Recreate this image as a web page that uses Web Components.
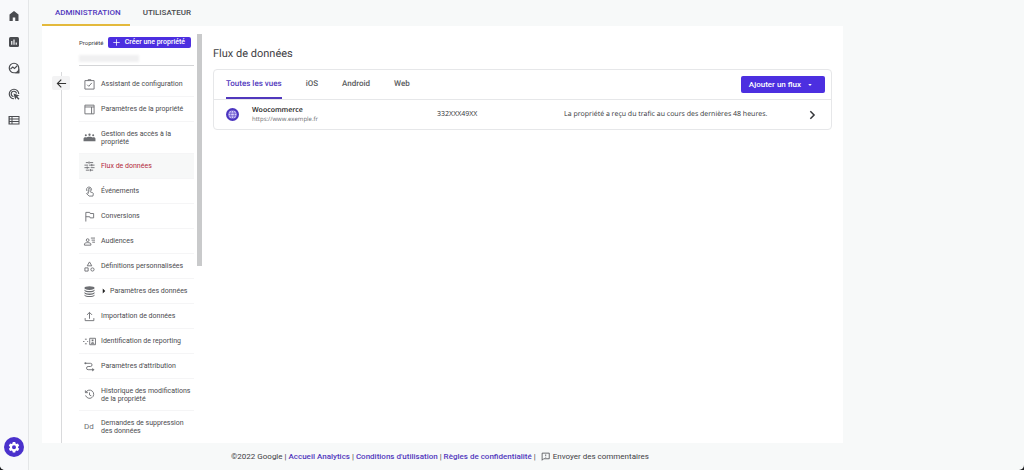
<!DOCTYPE html>
<html lang="fr">
<head>
<meta charset="utf-8">
<title>Administration - Flux de données</title>
<style>
  html { background: #1d1d20; }
  body {
    margin: 0;
    font-family: Roboto, "Liberation Sans", sans-serif;
    color: #3f4145;
    --accent: #4c2fe0;
    --link: #5138bd;
    --line: #e6e7e9;
  }
</style>
</head>
<body>
<admin-app></admin-app>

<script>
const ICONS = {
  home: `<path fill="currentColor" d="M12 2 3 9v13h6.500v-7h5v7H21V9z"/>`,
  chart: `<rect x="2" y="2" width="20" height="20" rx="3" fill="currentColor"/><path stroke="#f8f9fb" stroke-width="2.4" d="M7.500 10v7.500M12 7v10.500M16.500 13v4.500"/>`,
  explore: `<path fill="none" stroke="currentColor" stroke-width="2.400" d="M21.500 21.500H12A9.500 9.500 0 1 1 21.500 12z"/><path fill="none" stroke="currentColor" stroke-width="2.200" d="m5 14 4.500-4 3.500 3 5.500-5.500"/><path fill="currentColor" d="M22.500 14v8.500H14z"/>`,
  ads: `<path fill="none" stroke="currentColor" stroke-width="2.300" d="M21.500 12A9.500 9.500 0 1 0 12 21.500M17 11a5.300 5.300 0 1 0-6 6"/><path fill="currentColor" d="m11 11 12 4-4.500 2 4.500 4.500-2 2-4.500-4.500-2 4.500z"/>`,
  list: `<path fill="currentColor" fill-rule="evenodd" d="M1 4h22v17H1zM3.500 6v3h3.500V6zm5.500 0v3h12V6zM3.500 11v3h3.500v-3zm5.500 0v3h12v-3zM3.500 16v3h3.500v-3zm5.500 0v3h12v-3z"/>`,
  gear: `<path fill="currentColor" fill-rule="evenodd" d="M9.500 2h5l.6 3 1.900 1.100 2.900-1 2.500 4.300-2.300 2v2.200l2.300 2-2.500 4.300-2.900-1-1.900 1.100-.6 3h-5l-.6-3L7 18.900l-2.900 1-2.500-4.300 2.300-2v-2.200l-2.300-2 2.500-4.300 2.900 1L8.900 5zM12 8.500a4 4 0 1 0 0 8 4 4 0 0 0 0-8z"/>`,
  back: `<path fill="none" stroke="currentColor" stroke-width="2.400" d="M22 12H3m8.500-8.500L3 12l8.500 8.500"/>`,
  plus: `<path fill="none" stroke="currentColor" stroke-width="2.600" d="M12 1v22M1 12h22"/>`,
  check: `<path fill="none" stroke="currentColor" stroke-width="2" d="M2 3.500h20V22H2zM9 4V1.500h6V4M7 12.500l3.500 3.500 6.500-7.500"/>`,
  layout: `<path fill="none" stroke="currentColor" stroke-width="2" d="M2 2.500h20v19H2zM2 6.500h20M16.500 6.500v15"/>`,
  people: `<g fill="currentColor"><circle cx="4" cy="7" r="2.200"/><circle cx="12" cy="6" r="2.500"/><circle cx="20" cy="7" r="2.200"/><path d="M-1 20v-5c0-3 3-4 6-3 2-2 12-2 14 0 3-1 6 0 6 3v5z"/></g>`,
  streams: `<path fill="none" stroke="currentColor" stroke-width="2" d="M4 3.500h6M12 3.500h8M1 9h8M11 9h12M1 14.500h11M14.500 14.500H23M4 20h8M14 20h6M11 1v5M17 6.500v5M7 12v5M14 17.500v5"/>`,
  touch: `<path fill="none" stroke="currentColor" stroke-width="1.900" d="M6.500 11A5.500 5.500 0 1 1 16 10M9.500 16V7a1.900 1.900 0 0 1 3.800 0v5.500l6 2.500c1 .5 1.200 1.200 1 2.200L19.500 22H11l-5.500-5.500 1.500-1.300z"/>`,
  flag: `<path fill="none" stroke="currentColor" stroke-width="2" d="M4 23V3h8.500l1 2.500H21V15h-7.500l-1-2.500H4"/>`,
  audience: `<path fill="none" stroke="currentColor" stroke-width="2" d="M15 4.500h9M16.500 9H24M18 13.500h6M1 20v-2.500c0-4 14-4 14 0V20z"/><circle cx="8" cy="9" r="3" fill="none" stroke="currentColor" stroke-width="2"/>`,
  shapes: `<path fill="none" stroke="currentColor" stroke-width="2" d="m12 2 5 8.500H7zM2 15h7v7H2z"/><circle cx="18.500" cy="18.500" r="3.500" fill="none" stroke="currentColor" stroke-width="2"/>`,
  database: `<g fill="currentColor"><ellipse cx="12" cy="4.500" rx="11" ry="4"/><path d="M1 7.500c3 4.500 19 4.500 22 0v3c-3 4.500-19 4.500-22 0zM1 13c3 4.500 19 4.500 22 0v3c-3 4.500-19 4.500-22 0zM1 18.500c3 4.500 19 4.500 22 0v2c-3 4.500-19 4.500-22 0z"/></g>`,
  upload: `<path fill="none" stroke="currentColor" stroke-width="2" d="M12 17V3M6.500 8.500 12 3l5.500 5.500M2.500 15.500V21h19v-5.500"/>`,
  identity: `<path fill="none" stroke="currentColor" stroke-width="2" d="M-2 12h3M2 7h4M2 17h4M7 12h2M12.500 5H25v14H12.500z"/><path fill="currentColor" d="M15 17c0-4.500 7.500-4.500 7.500 0zM16.700 7.500h4v4h-4z"/>`,
  path: `<path fill="none" stroke="currentColor" stroke-width="2" d="M4 5h10a3.500 3.500 0 0 1 0 7H9a3.500 3.500 0 0 0 0 7h11"/><circle cx="3" cy="5" r="2.200" fill="currentColor"/><path fill="currentColor" d="m18 15 5 4-5 4z"/>`,
  history: `<path fill="none" stroke="currentColor" stroke-width="2" d="M4 7.500A9 9 0 1 1 3.500 14M3 3v5h5.500M12 7.500V13l4 2"/>`,
  globe: `<circle cx="12" cy="12" r="12" fill="#4c36c0"/><circle cx="12" cy="12" r="7.500" fill="#d6cffa"/><g fill="none" stroke="#5a45c8" stroke-width="1.300"><ellipse cx="12" cy="12" rx="3.300" ry="7.500"/><path d="M5 9.500h14M5 14.500h14"/></g>`,
  chevron: `<path fill="none" stroke="currentColor" stroke-width="3.600" d="m8 3 9 9-9 9"/>`,
  caret: `<path fill="currentColor" d="m5 8 7 8 7-8z"/>`,
  expand: `<path fill="currentColor" d="m7 2 10 10L7 22z"/>`,
  feedback: `<path fill="none" stroke="currentColor" stroke-width="2" d="M3 22V3h19v15H7zM12.500 6.500V11M12.500 13v2"/>`
};

class AdminIcon extends HTMLElement {
  constructor() {
    super();
    this.attachShadow({ mode: "open" });
  }

  connectedCallback() {
    this.shadowRoot.innerHTML = /* html */`
    <style>
      :host { display: block; flex: none; width: var(--icon-size, 12px); height: var(--icon-size, 12px); }
      svg { display: block; width: 100%; height: 100%; overflow: visible; }
    </style>
    <svg viewBox="0 0 24 24" aria-hidden="true">${ICONS[this.getAttribute("name")] ?? ""}</svg>`;
  }
}

class NavRail extends HTMLElement {
  constructor() {
    super();
    this.attachShadow({ mode: "open" });
    const items = [
      ["home", "Accueil"],
      ["chart", "Rapports"],
      ["explore", "Explorer"],
      ["ads", "Publicité"],
      ["list", "Configurer"]
    ];
    this.shadowRoot.innerHTML = /* html */`
    <style>
      :host {
        display: flex;
        flex-direction: column;
        justify-content: space-between;
        box-sizing: border-box;
        padding: 10px 0 13px;
        background: #f8f9fb;
        border-right: 1px solid #e4e6e8;
      }
      nav { display: grid; gap: 14px; justify-items: center; }
      a { color: #4a4c50; }
      button {
        display: grid;
        place-items: center;
        align-self: center;
        width: 20px;
        height: 20px;
        padding: 0;
        border: 0;
        border-radius: 50%;
        background: #4a31cc;
        color: #fff;
      }
    </style>
    <nav aria-label="Navigation principale">
      ${items.map(([icon, label]) => `<a href="#" aria-label="${label}"><admin-icon name="${icon}"></admin-icon></a>`).join("")}
    </nav>
    <button aria-label="Administration"><admin-icon name="gear"></admin-icon></button>`;
  }
}

class AdminTabs extends HTMLElement {
  constructor() {
    super();
    this.attachShadow({ mode: "open" });
    this.shadowRoot.innerHTML = /* html */`
    <style>
      :host { display: flex; height: 26px; }
      button {
        padding: 2px 9px 0 13px;
        border: 0;
        border-bottom: 2px solid transparent;
        background: none;
        font: 500 8px/20px Roboto, sans-serif;
        color: #4a4c50;
      }
      [aria-selected="true"] { color: var(--link); border-color: #e3b93c; }
    </style>
    <button role="tab" aria-selected="true">ADMINISTRATION</button>
    <button role="tab" aria-selected="false">UTILISATEUR</button>`;
  }
}

class MenuItem extends HTMLElement {
  constructor() {
    super();
    this.attachShadow({ mode: "open" });
  }

  connectedCallback() {
    const icon = this.getAttribute("icon");
    this.shadowRoot.innerHTML = /* html */`
    <style>
      :host { display: block; border-bottom: 1px solid #f5f5f6; }
      :host([active]) { background: #f7f8f8; }
      :host(:last-child) { border-color: transparent; }
      a {
        display: flex;
        align-items: center;
        gap: 6px;
        min-height: 24px;
        padding: 0 0 0 4px;
        font-size: 7px;
        line-height: 8px;
        color: #4a4b4e;
        text-decoration: none;
      }
      :host([tall]) a { min-height: 31px; }
      :host([active]) a { color: #b3283a; }
      .icon { display: grid; place-items: center; width: 12px; color: #6d6f73; font-size: 8px; --icon-size: 11px; }
      .expand { --icon-size: 6px; color: #222; margin-right: -3px; }
    </style>
    <a href="#">
      <span class="icon">${icon ? `<admin-icon name="${icon}"></admin-icon>` : "Dd"}</span>
      ${this.hasAttribute("expandable") ? `<admin-icon class="expand" name="expand"></admin-icon>` : ""}
      <span><slot></slot></span>
    </a>`;
  }
}

class PropertyMenu extends HTMLElement {
  constructor() {
    super();
    this.attachShadow({ mode: "open" });
    this.shadowRoot.innerHTML = /* html */`
    <style>
      :host { display: grid; grid-template-columns: 18px 127px 5px; padding-left: 10px; }
      .rail { display: flex; flex-direction: column; align-items: center; padding-top: 46px; }
      .rail i { width: 1px; height: 4px; background: #d9dadc; }
      .rail i:last-child { flex: 1; }
      .rail button {
        display: grid;
        place-items: center;
        width: 18px;
        height: 14px;
        padding: 0;
        border: 0;
        border-radius: 2px;
        background: #f3f3f4;
        color: #333;
        --icon-size: 11px;
      }
      .column { padding: 0 3px 0 9px; }
      .head { display: flex; align-items: center; justify-content: space-between; padding: 11px 3px 0 0; font-size: 6px; line-height: 11px; }
      .head button {
        display: flex;
        align-items: center;
        gap: 5px;
        height: 11px;
        padding: 0 6px 0 5px;
        border: 0;
        border-radius: 2px;
        background: var(--accent);
        color: #fff;
        font: 500 7px/11px Roboto, sans-serif;
        --icon-size: 7px;
      }
      .property { display: block; width: 100%; padding: 7px 0 3px; border: 0; border-bottom: 1px solid #d4d5d7; background: none; }
      .property span { display: block; width: 60px; height: 7px; background: #f0f0f1; filter: blur(1px); }
      nav { padding-top: 6px; }
      .scroll { margin-top: 8px; height: 232px; background: #c9cacb; }
    </style>
    <div class="rail"><i></i><button aria-label="Retour"><admin-icon name="back"></admin-icon></button><i></i></div>
    <div class="column">
      <div class="head"><span>Propriété</span><button><admin-icon name="plus"></admin-icon>Créer une propriété</button></div>
      <button class="property" aria-label="Choisir une propriété"><span></span></button>
      <nav aria-label="Propriété">
        <menu-item icon="check">Assistant de configuration</menu-item>
        <menu-item icon="layout">Paramètres de la propriété</menu-item>
        <menu-item icon="people" tall>Gestion des accès à la<br>propriété</menu-item>
        <menu-item icon="streams" active>Flux de données</menu-item>
        <menu-item icon="touch">Événements</menu-item>
        <menu-item icon="flag">Conversions</menu-item>
        <menu-item icon="audience">Audiences</menu-item>
        <menu-item icon="shapes">Définitions personnalisées</menu-item>
        <menu-item icon="database" expandable>Paramètres des données</menu-item>
        <menu-item icon="upload">Importation de données</menu-item>
        <menu-item icon="identity">Identification de reporting</menu-item>
        <menu-item icon="path">Paramètres d'attribution</menu-item>
        <menu-item icon="history" tall>Historique des modifications<br>de la propriété</menu-item>
        <menu-item tall>Demandes de suppression<br>des données</menu-item>
      </nav>
    </div>
    <div class="scroll"></div>`;
  }
}

class StreamCard extends HTMLElement {
  constructor() {
    super();
    this.attachShadow({ mode: "open" });
    this.shadowRoot.innerHTML = /* html */`
    <style>
      :host { display: block; border: 1px solid var(--line); border-radius: 4px; text-rendering: geometricPrecision; }
      .bar { display: flex; align-items: center; justify-content: space-between; padding: 0 6px 0 12px; border-bottom: 1px solid var(--line); }
      .tabs { display: flex; gap: 24px; }
      .tabs button {
        padding: 0;
        border: 0;
        border-bottom: 2px solid transparent;
        background: none;
        font: 500 8px/27px Roboto, sans-serif;
        text-rendering: inherit;
        color: #5a5c60;
      }
      .tabs [aria-selected="true"] { color: var(--link); border-color: var(--link); }
      .add {
        display: flex;
        align-items: center;
        gap: 6px;
        height: 17px;
        padding: 0 12px 0 8px;
        border: 0;
        border-radius: 2px;
        background: var(--accent);
        color: #fff;
        font: 500 8px/17px Roboto, sans-serif;
        --icon-size: 6px;
      }
      table { width: 100%; border-collapse: collapse; table-layout: fixed; font-family: "Open Sans", Roboto, sans-serif; font-size: 7px; line-height: 9px; color: #333539; }
      td { height: 29px; padding: 0; }
      .globe { width: 38px; padding-left: 12px; box-sizing: border-box; --icon-size: 13px; }
      .name { width: 30%; }
      .id { width: 127px; }
      .go { width: 24px; --icon-size: 10px; }
      strong { display: block; font-weight: 600; color: #222; }
      small { display: block; font-size: 6px; line-height: 8px; color: #6a6c70; }
    </style>
    <div class="bar">
      <div class="tabs" role="tablist">
        <button role="tab" aria-selected="true">Toutes les vues</button>
        <button role="tab">iOS</button>
        <button role="tab">Android</button>
        <button role="tab">Web</button>
      </div>
      <button class="add">Ajouter un flux<admin-icon name="caret"></admin-icon></button>
    </div>
    <table aria-label="Flux de données">
      <tr>
        <td class="globe"><admin-icon name="globe"></admin-icon></td>
        <td class="name"><strong>Woocommerce</strong><small>https://www.exemple.fr</small></td>
        <td class="id">332XXX49XX</td>
        <td>La propriété a reçu du trafic au cours des dernières 48 heures.</td>
        <td class="go"><admin-icon name="chevron"></admin-icon></td>
      </tr>
    </table>`;
  }
}

class AdminFooter extends HTMLElement {
  constructor() {
    super();
    this.attachShadow({ mode: "open" });
    this.shadowRoot.innerHTML = /* html */`
    <style>
      :host { display: flex; align-items: center; justify-content: center; gap: 2px; height: 27px; padding-right: 5px; font-size: 8px; line-height: 10px; }
      a { color: var(--link); font-weight: 500; text-decoration: none; }
      button { display: flex; align-items: center; gap: 3px; margin-left: 3px; padding: 0; border: 0; background: none; font: inherit; color: inherit; --icon-size: 9px; }
    </style>
    <span>©2022 Google</span><span>|</span>
    <a href="#">Accueil Analytics</a><span>|</span>
    <a href="#">Conditions d'utilisation</a><span>|</span>
    <a href="#">Règles de confidentialité</a><span>|</span>
    <button><admin-icon name="feedback"></admin-icon>Envoyer des commentaires</button>`;
  }
}

class AdminApp extends HTMLElement {
  constructor() {
    super();
    this.attachShadow({ mode: "open" });
    this.shadowRoot.innerHTML = /* html */`
    <style>
      :host {
        display: grid;
        grid-template-columns: 29px 1fr;
        min-height: 100vh;
        background: #f7f9f9;
        border-radius: 0 0 5px 5px;
        overflow: hidden;
      }
      main { padding-left: 13px; display: grid; grid-template-columns: 801fr 181fr; align-content: start; }
      admin-tabs, .panel, admin-footer { grid-column: 1; }
      .panel { display: flex; background: #fff; }
      section { flex: 1; padding: 20px 11px 0; }
      h1 { margin: 0 0 8px; font-size: 11px; line-height: 15px; font-weight: 400; color: #3f4145; text-rendering: geometricPrecision; }
    </style>
    <nav-rail></nav-rail>
    <main>
      <admin-tabs role="tablist"></admin-tabs>
      <div class="panel">
        <property-menu></property-menu>
        <section>
          <h1>Flux de données</h1>
          <stream-card></stream-card>
        </section>
      </div>
      <admin-footer></admin-footer>
    </main>`;
  }
}

customElements.define("admin-icon", AdminIcon);
customElements.define("nav-rail", NavRail);
customElements.define("admin-tabs", AdminTabs);
customElements.define("menu-item", MenuItem);
customElements.define("property-menu", PropertyMenu);
customElements.define("stream-card", StreamCard);
customElements.define("admin-footer", AdminFooter);
customElements.define("admin-app", AdminApp);
</script>
</body>
</html>
